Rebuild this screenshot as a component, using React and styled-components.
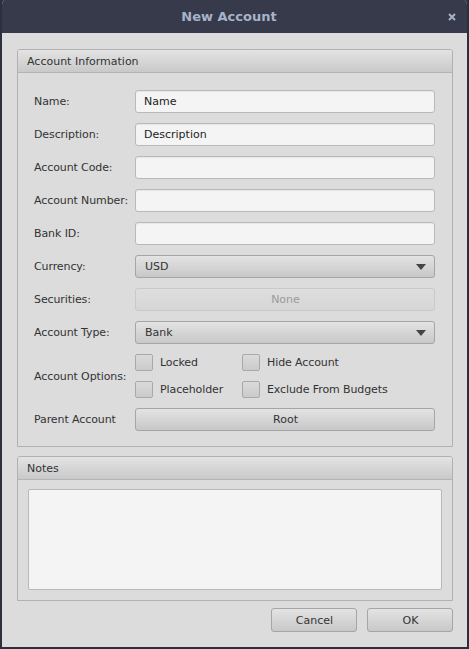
import React from "react";
import styled, { createGlobalStyle } from "styled-components";

const GlobalStyle = createGlobalStyle`
  html, body {
    margin: 0;
    padding: 0;
  }
  body {
    font-family: "DejaVu Sans", "Liberation Sans", sans-serif;
    background: #2c2f3c;
  }
  * {
    box-sizing: border-box;
  }
`;

const Window = styled.div`
  width: 469px;
  height: 649px;
  display: flex;
  flex-direction: column;
  border: 2px solid #2c2f3c;
  border-top: 0;
  border-radius: 5px 5px 0 0;
  background: #dcdcdc;
  overflow: hidden;
`;

const TitleBar = styled.div`
  height: 33px;
  flex: none;
  display: grid;
  grid-template-columns: 1fr auto 1fr;
  align-items: center;
  background: #373a4a;
  padding: 0 11px 0 0;
`;

const Title = styled.div`
  grid-column: 2;
  font-size: 13px;
  font-weight: bold;
  color: #a6b4c8;
`;

const CloseButton = styled.div`
  grid-column: 3;
  justify-self: end;
  display: flex;
  width: 8px;
  height: 8px;
`;

const Body = styled.div`
  flex: 1;
  display: flex;
  flex-direction: column;
  gap: 9px;
  padding: 16px 14px 15px 15px;
`;

const Panel = styled.div`
  display: flex;
  flex-direction: column;
  border: 1px solid #b1b1b1;
  border-radius: 3px 3px 0 0;
  flex: ${(p) => (p.$grow ? 1 : "none")};
`;

const PanelHeader = styled.div`
  height: 23px;
  display: flex;
  align-items: center;
  padding-left: 9px;
  font-size: 11px;
  color: #333;
  background: linear-gradient(#e3e3e3, #c9c9c9);
  border-bottom: 1px solid #b4b4b4;
  border-radius: 2px 2px 0 0;
`;

const FormGrid = styled.div`
  display: grid;
  grid-template-columns: 101px 1fr;
  row-gap: 10px;
  padding: 17px 17px 15px 16px;
`;

const Label = styled.div`
  align-self: center;
  font-size: 11px;
  color: #333;
  letter-spacing: -0.1px;
`;

const Field = styled.div`
  height: 23px;
  display: flex;
  align-items: center;
  padding: 0 8px;
  font-size: 11px;
  color: #222;
  background: #f4f4f4;
  border: 1px solid #b9b9b9;
  border-radius: 3px;
  box-shadow: inset 0 1px 1px rgba(0, 0, 0, 0.06);
`;

const Button = styled.div`
  height: ${(p) => (p.$tall ? "24px" : "23px")};
  display: flex;
  align-items: center;
  justify-content: ${(p) => (p.$left ? "space-between" : "center")};
  padding: 0 8px 0 9px;
  font-size: 11px;
  color: ${(p) => (p.$disabled ? "#9a9a9a" : "#333")};
  background: ${(p) =>
    p.$disabled ? "linear-gradient(#dedede, #d6d6d6)" : "linear-gradient(#e3e3e3, #c8c8c8)"};
  border: 1px solid ${(p) => (p.$disabled ? "#c9c9c9" : "#a5a5a5")};
  border-radius: 3px;
`;

const Arrow = styled.span`
  width: 0;
  height: 0;
  border-left: 5px solid transparent;
  border-right: 5px solid transparent;
  border-top: 6px solid #444;
`;

const OptionsGrid = styled.div`
  display: grid;
  grid-template-columns: 107px auto;
  row-gap: 10px;
`;

const Option = styled.div`
  display: flex;
  align-items: center;
  gap: 7px;
  height: 17px;
  font-size: 11px;
  color: #333;
  letter-spacing: -0.1px;
`;

const Box = styled.span`
  width: 18px;
  height: 17px;
  background: linear-gradient(#dadada, #cbcbcb);
  border: 1px solid #a9a9a9;
  border-radius: 2px;
`;

const NotesArea = styled.div`
  flex: 1;
  display: flex;
  padding: 9px 10px 10px 10px;
`;

const TextArea = styled.div`
  flex: 1;
  background: #f4f4f4;
  border: 1px solid #b9b9b9;
  border-radius: 2px;
`;

const Footer = styled.div`
  display: flex;
  justify-content: flex-end;
  gap: 10px;
  margin-top: -2px;
`;

const FooterButton = styled(Button)`
  width: 86px;
`;

const fields = [
  { label: "Name:", value: "Name" },
  { label: "Description:", value: "Description" },
  { label: "Account Code:", value: "" },
  { label: "Account Number:", value: "" },
  { label: "Bank ID:", value: "" },
];

const App = () => {
  return (
    <>
      <GlobalStyle />
      <Window>
        <TitleBar>
          <Title>New Account</Title>
          <CloseButton>
            <svg width="8" height="8" viewBox="0 0 8 8">
              <path d="M1 1L7 7M7 1L1 7" stroke="#a6b4c8" strokeWidth="2" />
            </svg>
          </CloseButton>
        </TitleBar>
        <Body>
          <Panel>
            <PanelHeader>Account Information</PanelHeader>
            <FormGrid>
              {fields.map((f) => (
                <React.Fragment key={f.label}>
                  <Label>{f.label}</Label>
                  <Field>{f.value}</Field>
                </React.Fragment>
              ))}
              <Label>Currency:</Label>
              <Button $left>
                USD
                <Arrow />
              </Button>
              <Label>Securities:</Label>
              <Button $disabled>None</Button>
              <Label>Account Type:</Label>
              <Button $left>
                Bank
                <Arrow />
              </Button>
              <Label>Account Options:</Label>
              <OptionsGrid>
                <Option>
                  <Box />
                  Locked
                </Option>
                <Option>
                  <Box />
                  Hide Account
                </Option>
                <Option>
                  <Box />
                  Placeholder
                </Option>
                <Option>
                  <Box />
                  Exclude From Budgets
                </Option>
              </OptionsGrid>
              <Label>Parent Account</Label>
              <Button>Root</Button>
            </FormGrid>
          </Panel>
          <Panel $grow>
            <PanelHeader>Notes</PanelHeader>
            <NotesArea>
              <TextArea />
            </NotesArea>
          </Panel>
          <Footer>
            <FooterButton $tall>Cancel</FooterButton>
            <FooterButton $tall>OK</FooterButton>
          </Footer>
        </Body>
      </Window>
    </>
  );
};

export default App;
